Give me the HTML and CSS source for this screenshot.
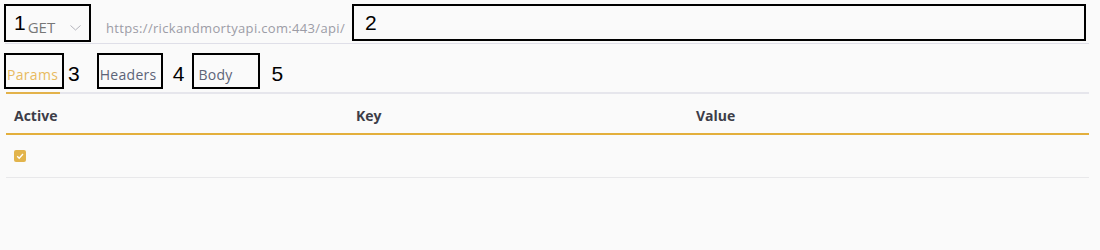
FILE: index.html
```html
<!DOCTYPE html>
<html>
<head>
<meta charset="utf-8">
<link rel="stylesheet" href="styles.css">
</head>
<body>
<div class="app">
  <div class="topbar">
    <div class="mark method">
      <span class="num num-in">1</span>
      <span class="method-name">GET</span>
      <svg class="chevron" width="11" height="6" viewBox="0 0 11 6"><polyline points="0.5,0.5 5.5,5 10.5,0.5" fill="none" stroke="#b4b4bc" stroke-width="1"/></svg>
    </div>
    <span class="url">https://rickandmortyapi.com:443/api/</span>
    <div class="mark path">
      <span class="num num-in">2</span>
    </div>
  </div>

  <div class="tabs">
    <div class="tab active"><div class="mark tab-box w60">Params</div></div>
    <span class="num n3">3</span>
    <div class="tab t4"><div class="mark tab-box w66">Headers</div></div>
    <span class="num n4">4</span>
    <div class="tab t5"><div class="mark tab-box w68 pad4">Body</div></div>
    <span class="num n5">5</span>
  </div>

  <div class="table">
    <div class="row head">
      <div class="cell">Active</div>
      <div class="cell">Key</div>
      <div class="cell">Value</div>
    </div>
    <div class="row body-row">
      <div class="cell">
        <span class="check"><svg width="12" height="12" viewBox="0 0 12 12"><polyline points="3.2,6.2 5.2,8.2 9,4" fill="none" stroke="#fff" stroke-width="1.3"/></svg></span>
      </div>
      <div class="cell"></div>
      <div class="cell"></div>
    </div>
  </div>
</div>
</body>
</html>
```

FILE: styles.css
```css
html, body {
  margin: 0;
  padding: 0;
  background: #fafafa;
}

body {
  font-family: "Open Sans", "Liberation Sans", sans-serif;
}

.app {
  margin-left: 6px;
  width: 1083px;
}

.mark {
  border: 2px solid #000;
  box-sizing: border-box;
}

.num {
  font-family: "Liberation Sans", Arial, sans-serif;
  font-size: 21px;
  line-height: 21px;
  color: #000;
}

.topbar {
  display: flex;
  align-items: flex-start;
  padding-top: 4px;
  padding-bottom: 1px;
  border-bottom: 1px solid #dfdfe8;
  margin-left: -1px;
}

.method {
  display: flex;
  align-items: flex-start;
  width: 87px;
  height: 38px;
  margin-left: -1px;
  padding-left: 8px;
}

.num-in {
  margin-top: 6px;
}

.method-name {
  margin-top: 14px;
  margin-left: 2px;
  font-size: 15px;
  line-height: 15px;
  color: #777;
}

.chevron {
  margin-top: 19px;
  margin-left: 15px;
}

.url {
  margin-top: 18px;
  margin-left: 15px;
  font-size: 13px;
  line-height: 13px;
  letter-spacing: 0.33px;
  color: #9c9ca6;
}

.path {
  display: flex;
  align-items: flex-start;
  width: 734px;
  height: 37px;
  margin-left: auto;
  margin-right: 3px;
  padding-left: 11px;
}

.tabs {
  display: flex;
  align-items: flex-start;
  margin-top: 9px;
  border-bottom: 2px solid #e6e6ec;
}

.tab {
  padding-bottom: 3px;
  border-bottom: 2px solid transparent;
  margin-bottom: -2px;
}

.tab.active {
  border-bottom-color: #e3b24a;
}

.tab-box {
  height: 36px;
  margin: 0 -4px 0 -2px;
  padding: 13px 0 0 1px;
  font-size: 14px;
  line-height: 14px;
  letter-spacing: 0.3px;
  color: #5d6478;
  white-space: nowrap;
}

.active .tab-box {
  color: #e8bb60;
}

.w60 { width: 60px; }
.w66 { width: 66px; }
.w68 { width: 68px; }
.pad4 { padding-left: 4px; }

.n3, .n4, .n5 {
  margin-top: 10px;
}

.n3 { margin-left: 8px; }
.t4 { margin-left: 19px; }
.n4 { margin-left: 14px; }
.t5 { margin-left: 10px; }
.n5 { margin-left: 15px; }

.row {
  display: grid;
  grid-template-columns: 342px 340px 1fr;
}

.cell {
  padding-left: 8px;
}

.head {
  height: 41px;
  box-sizing: border-box;
  padding-top: 15px;
  border-bottom: 2px solid #e3af3c;
  font-size: 14px;
  line-height: 14px;
  font-weight: 700;
  color: #3d3d48;
}

.body-row {
  height: 43px;
  box-sizing: border-box;
  padding-top: 15px;
  border-bottom: 1px solid #e8e8ea;
}

.check {
  display: block;
  width: 12px;
  height: 12px;
  border-radius: 2px;
  background: #e2b44c;
}

.check svg {
  display: block;
}
```
